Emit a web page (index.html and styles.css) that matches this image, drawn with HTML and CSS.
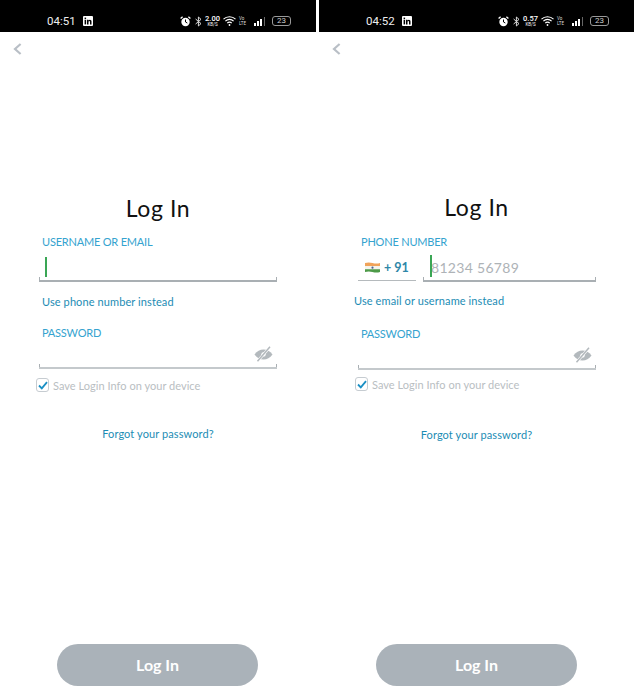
FILE: index.html
```html
<!DOCTYPE html>
<html lang="en">
<head>
  <meta charset="UTF-8" />
  <meta name="viewport" content="width=device-width, initial-scale=1.0"/>
  <title>Log In</title>
  <link rel="stylesheet" href="styles.css">
</head>
<body>
  <svg class="defs" width="0" height="0">
    <symbol id="ic-linkedin" viewBox="0 0 10 10">
      <rect width="10" height="10" rx="1" fill="#fff"/>
      <rect x="1.6" y="3.8" width="1.5" height="4.6" fill="#000"/>
      <rect x="1.6" y="1.6" width="1.5" height="1.5" fill="#000"/>
      <path d="M4 3.8h1.4v.7c.4-.6 1-.8 1.5-.8 1 0 1.6.7 1.6 1.9v2.8H7V6c0-.6-.2-1-.7-1-.5 0-.8.4-.8 1v2.4H4z" fill="#000"/>
    </symbol>
    <symbol id="ic-alarm" viewBox="0 0 11 11">
      <circle cx="5.5" cy="6" r="4.2" fill="#fff"/>
      <path d="M5.5 3.5V6l1.8 1" stroke="#000" fill="none"/>
      <path d="M.6 2.6 2.6.8M10.4 2.6 8.4.8" stroke="#fff" stroke-width="1.3"/>
    </symbol>
    <symbol id="ic-bluetooth" viewBox="0 0 7 11">
      <path d="M.6 3 6 7.6 3.4 10V1L6 3.4.6 8" stroke="#ddd" fill="none"/>
    </symbol>
    <symbol id="ic-wifi" viewBox="0 0 13 10">
      <path d="M.5 3.2a8.4 8.4 0 0 1 12 0M2.4 5.2a5.6 5.6 0 0 1 8.2 0M4.3 7.1a2.9 2.9 0 0 1 4.4 0" stroke="#fff" stroke-width="1.1" fill="none"/>
      <circle cx="6.5" cy="9" r=".9" fill="#fff"/>
    </symbol>
    <symbol id="ic-signal" viewBox="0 0 11 9">
      <rect x="0" y="6" width="2" height="3" fill="#fff"/>
      <rect x="3" y="4" width="2" height="5" fill="#fff"/>
      <rect x="6" y="2" width="2" height="7" fill="#fff"/>
      <rect x="10" y="0" width="1" height="9" fill="#666"/>
    </symbol>
    <symbol id="ic-eye" viewBox="0 0 19 16">
      <path d="M.5 8.5C3 4.8 6 3.4 9.5 3.4s6.500 1.400 9 5.100c-2.500 3.500-5.500 4.900-9 4.900s-6.500-1.400-9-4.900z" fill="#b3b9bd"/>
      <circle cx="9.500" cy="8.400" r="2.200" fill="#fff"/>
      <path d="M3.500 15.300 16 .8" stroke="#fff" stroke-width="2.600"/>
      <path d="M3.500 15.300 16 .8" stroke="#b3b9bd" stroke-width="1.500"/>
    </symbol>
    <symbol id="ic-back" viewBox="0 0 9 12">
      <path d="M7.600 1 2 6l5.600 5" stroke="#b9bfc6" stroke-width="2.200" fill="none"/>
    </symbol>
    <symbol id="ic-check" viewBox="0 0 10 9">
      <path d="M1 4.500 3.800 7.400 9 1.200" stroke="#1a8fc4" stroke-width="1.800" fill="none"/>
    </symbol>
    <symbol id="ic-flag" viewBox="0 0 15 11">
      <path d="M0 1q3.700-1.200 7.500 0t7.500 0v3.200H0z" fill="#f0a35a"/>
      <rect y="4.200" width="15" height="3" fill="#f4f4ee"/>
      <path d="M0 7.200h15v2.800q-3.700 1.200-7.500 0T0 10z" fill="#4d9a48"/>
      <circle cx="7.500" cy="5.700" r="1.100" fill="#4a5f8e"/>
    </symbol>
  </svg>

  <div class="screens">
    <!-- email login -->
    <section class="screen">
      <div class="statusbar">
        <span class="clock">04:51</span>
        <svg class="ic-in"><use href="#ic-linkedin"/></svg>
        <div class="status-right">
          <svg class="ic-alarm"><use href="#ic-alarm"/></svg>
          <svg class="ic-bt"><use href="#ic-bluetooth"/></svg>
          <span class="speed"><b>2.00</b><small>KB/S</small></span>
          <svg class="ic-wifi"><use href="#ic-wifi"/></svg>
          <span class="volte"><small>Vo</small><small>LTE</small></span>
          <svg class="ic-signal"><use href="#ic-signal"/></svg>
          <span class="battery">23</span>
        </div>
      </div>
      <div class="backrow"><svg class="ic-back"><use href="#ic-back"/></svg></div>
      <h1 class="title">Log In</h1>
      <div class="label">USERNAME OR EMAIL</div>
      <div class="field"><span class="caret"></span></div>
      <a class="switch-link">Use phone number instead</a>
      <div class="label label-pass">PASSWORD</div>
      <div class="field field-pass"><svg class="ic-eye"><use href="#ic-eye"/></svg></div>
      <div class="save-row">
        <span class="checkbox"><svg class="ic-check"><use href="#ic-check"/></svg></span>
        <span>Save Login Info on your device</span>
      </div>
      <a class="forgot">Forgot your password?</a>
      <button class="login-btn">Log In</button>
    </section>

    <!-- phone login -->
    <section class="screen screen-phone">
      <div class="statusbar">
        <span class="clock">04:52</span>
        <svg class="ic-in"><use href="#ic-linkedin"/></svg>
        <div class="status-right">
          <svg class="ic-alarm"><use href="#ic-alarm"/></svg>
          <svg class="ic-bt"><use href="#ic-bluetooth"/></svg>
          <span class="speed"><b>0.57</b><small>KB/S</small></span>
          <svg class="ic-wifi"><use href="#ic-wifi"/></svg>
          <span class="volte"><small>Vo</small><small>LTE</small></span>
          <svg class="ic-signal"><use href="#ic-signal"/></svg>
          <span class="battery">23</span>
        </div>
      </div>
      <div class="backrow"><svg class="ic-back"><use href="#ic-back"/></svg></div>
      <h1 class="title">Log In</h1>
      <div class="label">PHONE NUMBER</div>
      <div class="phone-row">
        <div class="country">
          <svg class="ic-flag"><use href="#ic-flag"/></svg>
          <span>+ 91</span>
        </div>
        <div class="field field-number"><span class="caret"></span><span class="placeholder">81234 56789</span></div>
      </div>
      <a class="switch-link">Use email or username instead</a>
      <div class="label label-pass">PASSWORD</div>
      <div class="field field-pass"><svg class="ic-eye"><use href="#ic-eye"/></svg></div>
      <div class="save-row">
        <span class="checkbox"><svg class="ic-check"><use href="#ic-check"/></svg></span>
        <span>Save Login Info on your device</span>
      </div>
      <a class="forgot">Forgot your password?</a>
      <button class="login-btn">Log In</button>
    </section>
  </div>
</body>
</html>
```

FILE: styles.css
```css
* {
  margin: 0;
  padding: 0;
  box-sizing: border-box;
}

body {
  font-family: "Lato", "Open Sans", sans-serif;
  background: #fff;
  width: 634px;
  height: 700px;
  overflow: hidden;
}

.defs {
  display: block;
  height: 0;
}

.screens {
  display: grid;
  grid-template-columns: 316px 315px;
  column-gap: 3px;
  height: 700px;
}

.screen {
  display: flex;
  flex-direction: column;
  height: 700px;
}

.statusbar {
  display: flex;
  align-items: center;
  height: 32px;
  padding: 10px 25px 0 47px;
  background: #000;
  color: #fff;
  flex-shrink: 0;
}

.clock {
  font-family: "Roboto", sans-serif;
  font-size: 11.5px;
  width: 36px;
  color: #eee;
}

.ic-in {
  width: 10px;
  height: 10px;
}

.status-right {
  display: flex;
  align-items: center;
  margin-left: auto;
}

.ic-alarm { width: 11px; height: 11px; }
.ic-bt { width: 7px; height: 11px; margin-left: 4px; }
.ic-wifi { width: 13px; height: 10px; margin-left: 3px; }
.ic-signal { width: 11px; height: 9px; margin-left: 4px; }

.speed {
  display: flex;
  flex-direction: column;
  align-items: center;
  width: 15px;
  height: 12px;
  margin-left: 3px;
  font-family: "Roboto", sans-serif;
}

.speed b {
  font-size: 7.5px;
  line-height: 7px;
  font-weight: 500;
}

.speed small,
.volte small {
  display: block;
  font-size: 4.5px;
  line-height: 5px;
}

.volte {
  display: flex;
  flex-direction: column;
  font-family: "Roboto", sans-serif;
  width: 11px;
  margin-left: 3px;
  color: #ddd;
}

.battery {
  width: 19px;
  height: 10px;
  margin-left: 7px;
  border: 1px solid #999;
  border-radius: 3px;
  font-family: "Roboto", sans-serif;
  font-size: 8px;
  line-height: 8px;
  text-align: center;
  color: #ccc;
}

.backrow {
  height: 34px;
  padding: 11px 0 0 13px;
}

.ic-back {
  display: block;
  width: 9px;
  height: 12px;
}

.title {
  margin-top: 128px;
  height: 28px;
  font-size: 23px;
  line-height: 28px;
  font-weight: 400;
  letter-spacing: 0.6px;
  text-align: center;
  color: #111;
}

.label {
  margin: 13px 0 0 42px;
  height: 14px;
  font-size: 11px;
  line-height: 14px;
  letter-spacing: -0.2px;
  color: #35a3cf;
}

.field {
  position: relative;
  height: 30px;
  margin: 3px 39px 0 39px;
  border-bottom: 2px solid #a9afb3;
}

/* little end ticks on the underline */
.field::before,
.field::after {
  content: "";
  position: absolute;
  bottom: 0;
  width: 1px;
  height: 3px;
  background: #a9afb3;
}

.field::before { left: 0; }
.field::after { right: 0; }

.caret {
  position: absolute;
  left: 6px;
  top: 5px;
  width: 2px;
  height: 20px;
  background: #3aa655;
}

.switch-link {
  display: block;
  margin: 13px 0 0 42px;
  height: 14px;
  font-size: 11px;
  line-height: 14px;
  letter-spacing: 0.1px;
  color: #1c8cb4;
}

.label-pass {
  margin-top: 17px;
}

.field-pass {
  height: 29px;
  margin-top: 0;
  border-bottom-color: #c4c9cc;
}

.ic-eye {
  position: absolute;
  right: 4px;
  top: 6px;
  width: 19px;
  height: 16px;
}

.save-row {
  display: flex;
  align-items: center;
  gap: 4px;
  margin: 9px 0 0 36px;
  height: 14px;
  font-size: 11px;
  letter-spacing: 0.03px;
  color: #b9bec2;
}

.checkbox {
  display: flex;
  align-items: center;
  justify-content: center;
  width: 13px;
  height: 14px;
  border: 1px solid #c6ccd1;
  border-radius: 3px;
}

.ic-check {
  width: 10px;
  height: 9px;
}

.forgot {
  display: block;
  margin-top: 35px;
  height: 14px;
  font-size: 11px;
  line-height: 14px;
  letter-spacing: 0.1px;
  text-align: center;
  color: #1c8cb4;
}

.login-btn {
  display: block;
  width: 201px;
  height: 42px;
  margin: auto 0 14px 57px;
  padding-bottom: 2px;
  border: none;
  border-radius: 21px;
  background: #aab2b9;
  color: #fff;
  font-family: inherit;
  font-size: 16px;
  font-weight: 700;
}

/* phone variant sits a pixel off the email one */
.screen-phone .title {
  margin-top: 127px;
}

.screen-phone .label {
  margin-top: 14px;
}

.phone-row {
  display: flex;
  gap: 7px;
  margin: 3px 38px 0 39px;
}

.country {
  display: flex;
  align-items: center;
  gap: 4px;
  width: 58px;
  height: 29px;
  padding: 3px 0 0 7px;
  border-bottom: 1px solid #b5babd;
  font-size: 12.5px;
  font-weight: 700;
  color: #2f87a8;
}

.ic-flag {
  width: 15px;
  height: 11px;
}

.field-number {
  flex: 1;
  margin: 0;
  display: flex;
  align-items: center;
  padding-top: 2px;
}

.screen-phone .caret {
  left: 7px;
  top: 3px;
  height: 22px;
}

.placeholder {
  padding-left: 8px;
  font-size: 14px;
  letter-spacing: 0.3px;
  color: #aeb3b7;
}

.screen-phone .switch-link {
  margin-left: 35px;
  margin-top: 12px;
}

.screen-phone .label-pass {
  margin-top: 19px;
}

.screen-phone .field-pass {
  margin-right: 38px;
}

.screen-phone .save-row {
  margin-top: 7px;
}

.screen-phone .forgot {
  margin-top: 37px;
}
```
